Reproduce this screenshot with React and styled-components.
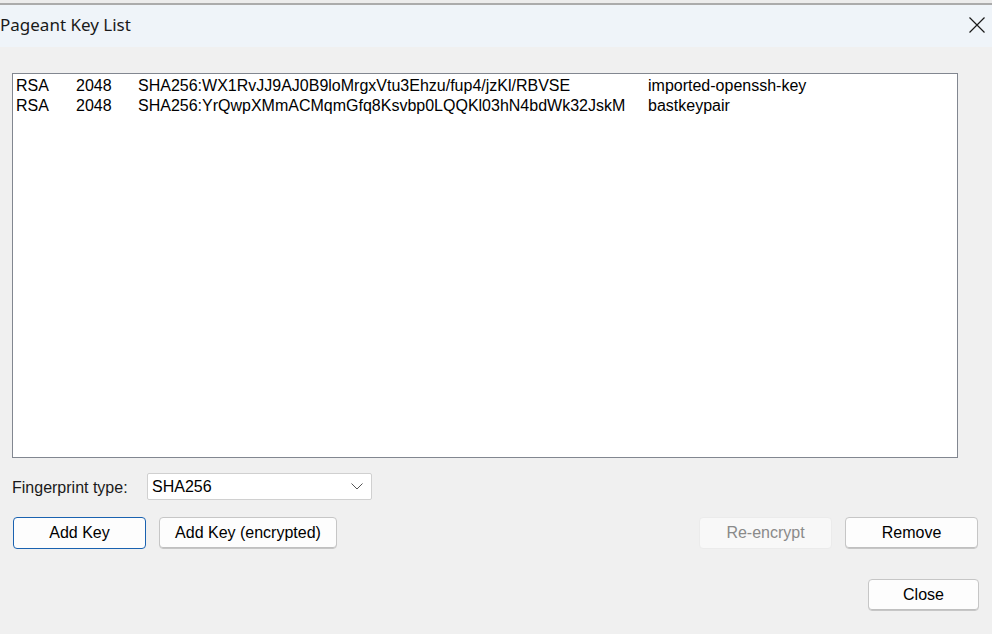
import React from 'react';
import styled, { createGlobalStyle } from 'styled-components';

const GlobalStyle = createGlobalStyle`
  html, body {
    margin: 0;
    padding: 0;
    background: #f0f0f0;
  }
  body {
    font-family: "Liberation Sans", Arial, sans-serif;
  }
`;

const Window = styled.div`
  width: 992px;
  height: 634px;
  display: flex;
  flex-direction: column;
  background: #f0f0f0;
  overflow: hidden;
`;

const TopEdge = styled.div`
  height: 3px;
  background: #ececec;
  border-bottom: 2px solid #ababab;
`;

const TitleBar = styled.div`
  height: 42px;
  display: flex;
  align-items: center;
  justify-content: space-between;
  background: #eff4f9;
`;

const Title = styled.span`
  font-family: "Noto Sans", "Open Sans", sans-serif;
  font-size: 17px;
  color: #1a1a1a;
  margin-top: -3px;
`;

const CloseX = styled.button`
  border: none;
  background: transparent;
  padding: 0;
  width: 16px;
  height: 16px;
  margin-right: 7px;
  margin-top: -3px;
  display: flex;
`;

const Body = styled.div`
  flex: 1;
  display: flex;
  flex-direction: column;
  padding: 26px 14px 0 12px;
`;

const KeyList = styled.div`
  width: 941px;
  height: 381px;
  background: #fff;
  border: 1px solid #828790;
  padding: 2px 0 0 3px;
  box-sizing: content-box;
  font-size: 16px;
  color: #000;
`;

const KeyRow = styled.div`
  display: grid;
  grid-template-columns: 60px 62px 510px 1fr;
  height: 20px;
  line-height: 20px;
  white-space: nowrap;
`;

const FingerprintRow = styled.div`
  display: flex;
  align-items: center;
  margin-top: 15px;
  height: 27px;
`;

const Label = styled.span`
  font-size: 16px;
  color: #1a1a1a;
  width: 135px;
  padding-top: 2px;
`;

const Select = styled.div`
  width: 225px;
  height: 27px;
  border: 1px solid #d0d0d0;
  border-radius: 2px;
  background: #fff;
  display: flex;
  align-items: center;
  justify-content: space-between;
  padding: 0 8px 0 4px;
  box-sizing: border-box;
  font-size: 16px;
  color: #000;
`;

const ButtonRow = styled.div`
  display: flex;
  align-items: center;
  margin-top: 17px;
  gap: 13px;
`;

const Spacer = styled.div`
  flex: 1;
`;

const Button = styled.button`
  width: ${p => p.$w}px;
  height: 32px;
  box-sizing: border-box;
  border-radius: 4px;
  font-family: "Liberation Sans", Arial, sans-serif;
  font-size: 16px;
  padding: 0;
  background: ${p => (p.$disabled ? '#f8f8f8' : '#fdfdfd')};
  color: ${p => (p.$disabled ? '#8a8a8a' : '#000')};
  border: 1px solid ${p => (p.$focused ? '#1a62b0' : p.$disabled ? '#ebebeb' : '#c6c6c6')};
  box-shadow: ${p => (p.$disabled || p.$focused ? 'none' : 'inset 0 -1px 0 #c0c0c0')};
`;

const CloseRow = styled.div`
  display: flex;
  justify-content: flex-end;
  margin-top: 30px;
  margin-right: -1px;
`;

const keys = [
  ['RSA', '2048', 'SHA256:WX1RvJJ9AJ0B9loMrgxVtu3Ehzu/fup4/jzKl/RBVSE', 'imported-openssh-key'],
  ['RSA', '2048', 'SHA256:YrQwpXMmACMqmGfq8Ksvbp0LQQKl03hN4bdWk32JskM', 'bastkeypair'],
];

export default function App() {
  return (
    <Window>
      <GlobalStyle />
      <TopEdge />
      <TitleBar>
        <Title>Pageant Key List</Title>
        <CloseX aria-label="Close">
          <svg width="16" height="16" viewBox="0 0 16 16">
            <path d="M0.5 0.5 L15.5 15.5 M15.5 0.5 L0.5 15.5" stroke="#1a1a1a" strokeWidth="1.2" fill="none" />
          </svg>
        </CloseX>
      </TitleBar>
      <Body>
        <KeyList>
          {keys.map(k => (
            <KeyRow key={k[2]}>
              {k.map((c, i) => <span key={i}>{c}</span>)}
            </KeyRow>
          ))}
        </KeyList>
        <FingerprintRow>
          <Label>Fingerprint type:</Label>
          <Select>
            <span>SHA256</span>
            <svg width="12" height="7" viewBox="0 0 12 7">
              <path d="M0.5 0.5 L6 6 L11.5 0.5" stroke="#555" strokeWidth="1" fill="none" />
            </svg>
          </Select>
        </FingerprintRow>
        <ButtonRow>
          <Button $w={133} $focused style={{ marginLeft: 1 }}>Add Key</Button>
          <Button $w={178}>Add Key (encrypted)</Button>
          <Spacer />
          <Button $w={133} $disabled>Re-encrypt</Button>
          <Button $w={133}>Remove</Button>
        </ButtonRow>
        <CloseRow>
          <Button $w={111}>Close</Button>
        </CloseRow>
      </Body>
    </Window>
  );
}
